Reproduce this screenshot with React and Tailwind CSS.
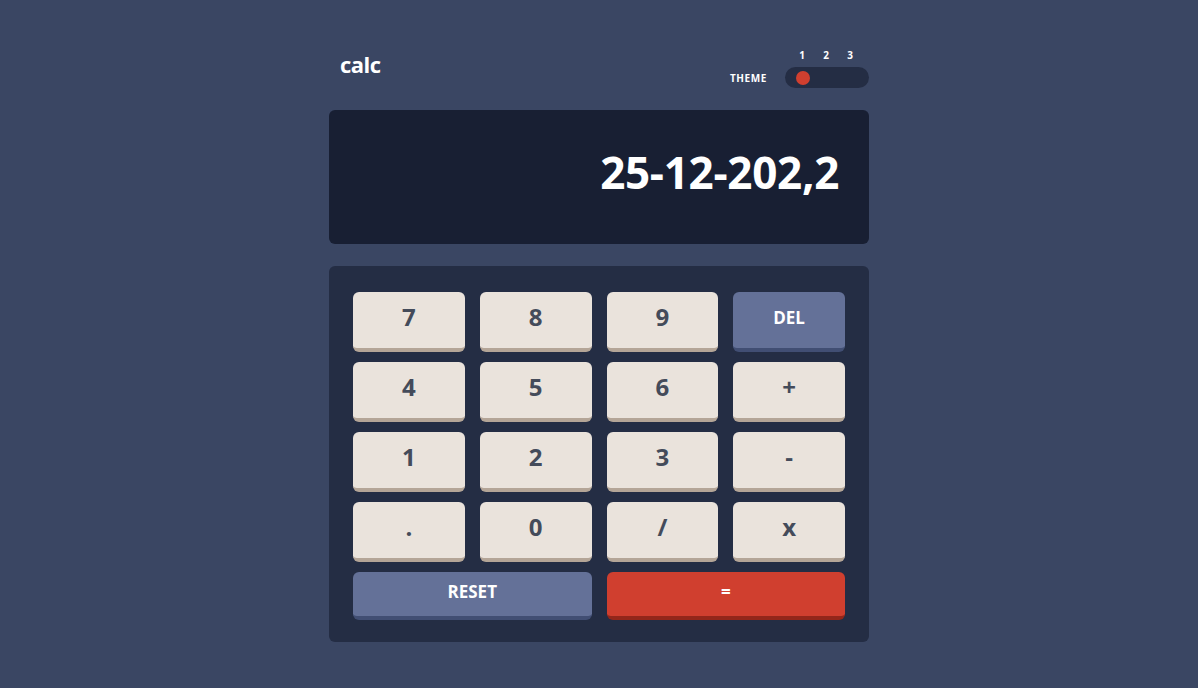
import React from "react";

const KEYS = [
  { label: "7" }, { label: "8" }, { label: "9" }, { label: "DEL", kind: "blue" },
  { label: "4" }, { label: "5" }, { label: "6" }, { label: "+" },
  { label: "1" }, { label: "2" }, { label: "3" }, { label: "-" },
  { label: "." }, { label: "0" }, { label: "/" }, { label: "x" },
];

function Key({ label, kind }) {
  if (kind === "blue") {
    return (
      <button className="h-[60px] rounded-[6px] bg-[#647198] border-b-4 border-[#414e73] text-white text-[17px] font-bold flex items-center justify-center pb-[4px]">
        {label}
      </button>
    );
  }
  return (
    <button className="h-[60px] rounded-[6px] bg-[#eae3dc] border-b-4 border-[#b4a597] text-[#444b5a] text-[24px] font-bold flex items-center justify-center pb-[7px]">
      {label}
    </button>
  );
}

export default function App() {
  return (
    <div
      className="min-h-screen w-full bg-[#3a4663] text-white"
      style={{ fontFamily: '"Open Sans", "Liberation Sans", sans-serif' }}
    >
      <div className="w-[540px] mx-auto pt-[46px]">
        <header className="flex items-end justify-between h-[42px]">
          <h1 className="pl-[11px] text-[22px] font-bold leading-none tracking-[-0.5px] mb-[13px]">calc</h1>
          <div className="flex flex-col items-end">
            <div className="flex w-[84px] pl-[5px] text-[10px] font-bold leading-none mb-[7px]">
              <span className="w-[24px] text-center">1</span>
              <span className="w-[24px] text-center">2</span>
              <span className="w-[24px] text-center">3</span>
            </div>
            <div className="flex items-center gap-[18px]">
              <span className="text-[10px] font-bold tracking-[0.6px] leading-none">THEME</span>
              <div className="w-[84px] h-[21px] rounded-full bg-[#242d44] flex items-center pl-[11px]">
                <div className="w-[14px] h-[14px] rounded-full bg-[#d03f2f]" />
              </div>
            </div>
          </div>
        </header>

        <div className="mt-[22px] h-[134px] rounded-[6px] bg-[#181f33] flex items-center justify-end pr-[30px] pb-[10px]">
          <span className="text-[44px] font-bold leading-none tracking-[-0.3px]">25-12-202,2</span>
        </div>

        <div className="mt-[22px] rounded-[6px] bg-[#242d44] px-[24px] pt-[26px] pb-[22px]">
          <div className="grid grid-cols-4 gap-x-[15px] gap-y-[10px]">
            {KEYS.map((k) => (
              <Key key={k.label} {...k} />
            ))}
            <button className="col-span-2 h-[48px] rounded-[6px] bg-[#647198] border-b-4 border-[#414e73] text-white text-[17px] font-bold flex items-center justify-center pb-[4px]">
              RESET
            </button>
            <button className="col-span-2 h-[48px] rounded-[6px] bg-[#d03f2f] border-b-4 border-[#93261a] text-white text-[17px] font-bold flex items-center justify-center pb-[4px]">
              =
            </button>
          </div>
        </div>
      </div>
    </div>
  );
}
